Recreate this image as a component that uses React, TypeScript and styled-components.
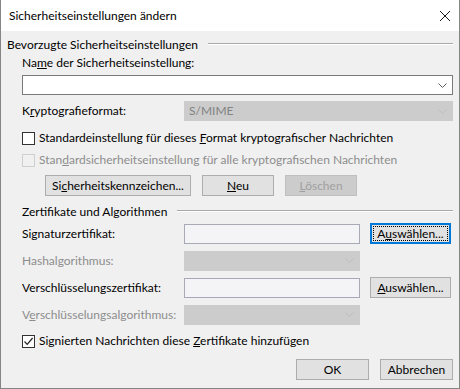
import React from "react";
import styled, { createGlobalStyle } from "styled-components";

const Global = createGlobalStyle`
  html, body { margin: 0; padding: 0; background: #ffffff; }
  * { box-sizing: border-box; }
`;

const FONT = `"Segoe UI", Lato, "Noto Sans", sans-serif`;

const Dialog = styled.div`
  width: 460px;
  height: 389px;
  display: flex;
  flex-direction: column;
  border: 1px solid #858585;
  border-top: none;
  background: #f0f0f0;
  font-family: ${FONT};
  font-size: 12px;
  line-height: 16px;
  color: #000;
  overflow: hidden;
`;

const TitleBar = styled.div`
  height: 31px;
  flex: none;
  display: flex;
  align-items: center;
  justify-content: space-between;
  background: #ffffff;
  padding: 0 9px 0 8px;
  font-size: 12px;
`;

const CloseIcon = styled.svg`
  width: 10px;
  height: 10px;
  display: block;
`;

const Body = styled.div`
  flex: 1;
  display: flex;
  flex-direction: column;
  padding: 6px 6px 0 6px;
`;

const GroupHeader = styled.div<{ $mt: number; $indent?: boolean }>`
  display: flex;
  align-items: center;
  gap: 10px;
  height: 16px;
  margin-top: ${(p) => p.$mt}px;
  padding-left: ${(p) => (p.$indent ? 15 : 0)}px;
`;

const GroupLine = styled.div`
  flex: 1;
  height: 2px;
  border-top: 1px solid #a9a9a9;
  border-bottom: 1px solid #ffffff;
  margin-top: -2px;
`;

const Indent = styled.div<{ $mt: number }>`
  padding-left: 15px;
  margin-top: ${(p) => p.$mt}px;
`;

const Label = styled.span<{ $disabled?: boolean }>`
  color: ${(p) => (p.$disabled ? "#8d8d8d" : "#000")};
  white-space: nowrap;
`;

const U = styled.span`
  text-decoration: underline;
  text-underline-offset: 1px;
`;

const Combo = styled.div<{ $disabled?: boolean }>`
  height: 20px;
  display: flex;
  align-items: center;
  justify-content: space-between;
  padding: 0 5px 0 4px;
  background: ${(p) => (p.$disabled ? "#cccccc" : "#ffffff")};
  border: 1px solid ${(p) => (p.$disabled ? "#cccccc" : "#7a7a7a")};
  color: ${(p) => (p.$disabled ? "#838383" : "#000")};
`;

const Chevron = styled.svg`
  width: 9px;
  height: 5px;
  display: block;
`;

const Row = styled.div<{ $mt: number }>`
  display: grid;
  grid-template-columns: 162px 269px;
  align-items: center;
  height: 20px;
  margin-top: ${(p) => p.$mt}px;
`;

const Grid = styled.div<{ $mt: number }>`
  display: grid;
  grid-template-columns: 162px 176px 91px;
  grid-auto-rows: 21px;
  row-gap: 6px;
  align-items: center;
  margin-top: ${(p) => p.$mt}px;
`;

const TextBox = styled.div`
  height: 20px;
  border: 1px solid #a7a9b6;
  background: #f4f4f6;
`;

const CheckRow = styled.label<{ $mt: number; $disabled?: boolean }>`
  display: flex;
  align-items: center;
  gap: 4px;
  height: 16px;
  margin-top: ${(p) => p.$mt}px;
  color: ${(p) => (p.$disabled ? "#8d8d8d" : "#000")};
`;

const Box = styled.span<{ $disabled?: boolean }>`
  width: 13px;
  height: 13px;
  flex: none;
  display: flex;
  align-items: center;
  justify-content: center;
  border: 1px solid ${(p) => (p.$disabled ? "#cfcfcf" : "#333333")};
  background: ${(p) => (p.$disabled ? "#f0f0f0" : "#ffffff")};
`;

const ButtonRow = styled.div<{ $mt: number; $pl: number; $end?: boolean }>`
  display: flex;
  gap: 11px;
  margin-top: ${(p) => p.$mt}px;
  padding-left: ${(p) => p.$pl}px;
  justify-content: ${(p) => (p.$end ? "flex-end" : "flex-start")};
`;

const Button = styled.div<{ $w: number; $disabled?: boolean; $focused?: boolean }>`
  position: relative;
  width: ${(p) => p.$w}px;
  height: 21px;
  justify-self: end;
  display: flex;
  align-items: center;
  justify-content: center;
  background: ${(p) => (p.$disabled ? "#cccccc" : "#e1e1e1")};
  border: ${(p) =>
    p.$focused ? "2px solid #0078d7" : p.$disabled ? "1px solid #bfbfbf" : "1px solid #adadad"};
  color: ${(p) => (p.$disabled ? "#a0a0a0" : "#000")};
  white-space: nowrap;
`;

const FocusRect = styled.span`
  position: absolute;
  inset: 1px;
  border: 1px dotted #000;
  pointer-events: none;
`;

const chevron = (color: string) => (
  <Chevron viewBox="0 0 9 5">
    <path d="M0.5 0.5 L4.5 4.5 L8.5 0.5" fill="none" stroke={color} strokeWidth="1" />
  </Chevron>
);

export default function App() {
  return (
    <>
      <Global />
      <Dialog>
        <TitleBar>
          <span>Sicherheitseinstellungen ändern</span>
          <CloseIcon viewBox="0 0 10 10">
            <path d="M0 0 L10 10 M10 0 L0 10" stroke="#1a1a1a" strokeWidth="1" />
          </CloseIcon>
        </TitleBar>
        <Body>
          <GroupHeader $mt={0}>
            <Label>Bevorzugte Sicherheitseinstellungen</Label>
            <GroupLine />
          </GroupHeader>
          <Indent $mt={2}>
            <Label>
              Na<U>m</U>e der Sicherheitseinstellung:
            </Label>
          </Indent>
          <Indent $mt={4}>
            <Combo>
              <span />
              {chevron("#606060")}
            </Combo>
          </Indent>
          <Indent $mt={6}>
            <Row $mt={0}>
              <Label>
                K<U>r</U>yptografieformat:
              </Label>
              <Combo $disabled>
                <span>S/MIME</span>
                {chevron("#bdbdbd")}
              </Combo>
            </Row>
          </Indent>
          <Indent $mt={9}>
            <CheckRow $mt={0}>
              <Box />
              <span>
                Standardeinstellung für dieses <U>F</U>ormat kryptografischer Nachrichten
              </span>
            </CheckRow>
            <CheckRow $mt={6} $disabled>
              <Box $disabled />
              <span>
                Stan<U>d</U>ardsicherheitseinstellung für alle kryptografischen Nachrichten
              </span>
            </CheckRow>
          </Indent>
          <ButtonRow $mt={7} $pl={38}>
            <Button $w={146}>
              <span>
                Si<U>c</U>herheitskennzeichen...
              </span>
            </Button>
            <Button $w={72}>
              <span>
                <U>N</U>eu
              </span>
            </Button>
            <Button $w={72} $disabled>
              <span>
                <U>L</U>öschen
              </span>
            </Button>
          </ButtonRow>
          <GroupHeader $mt={8} $indent>
            <Label>Zertifikate und Algorithmen</Label>
            <GroupLine />
          </GroupHeader>
          <Indent $mt={3}>
            <Grid $mt={0}>
              <Label>Signaturzertifikat:</Label>
              <TextBox />
              <Button $w={81} $focused>
                <FocusRect />
                <span>
                  A<U>u</U>swählen...
                </span>
              </Button>
              <Label $disabled>
                Hashal<U>g</U>orithmus:
              </Label>
              <Combo $disabled>
                <span />
                {chevron("#bdbdbd")}
              </Combo>
              <span />
              <Label>Verschlüsselungszertifikat:</Label>
              <TextBox />
              <Button $w={81}>
                <span>
                  <U>A</U>uswählen...
                </span>
              </Button>
              <Label $disabled>
                V<U>e</U>rschlüsselungsalgorithmus:
              </Label>
              <Combo $disabled>
                <span />
                {chevron("#bdbdbd")}
              </Combo>
              <span />
            </Grid>
          </Indent>
          <Indent $mt={8}>
            <CheckRow $mt={0}>
              <Box>
                <svg width="11" height="11" viewBox="0 0 11 11">
                  <path d="M1.5 5.5 L4.2 8.3 L9.6 2" fill="none" stroke="#222" strokeWidth="1.2" />
                </svg>
              </Box>
              <span>
                Signierten Nachrichten diese <U>Z</U>ertifikate hinzufügen
              </span>
            </CheckRow>
          </Indent>
          <ButtonRow $mt={10} $pl={0} $end>
            <Button $w={73}>OK</Button>
            <Button $w={73}>Abbrechen</Button>
          </ButtonRow>
        </Body>
      </Dialog>
    </>
  );
}
